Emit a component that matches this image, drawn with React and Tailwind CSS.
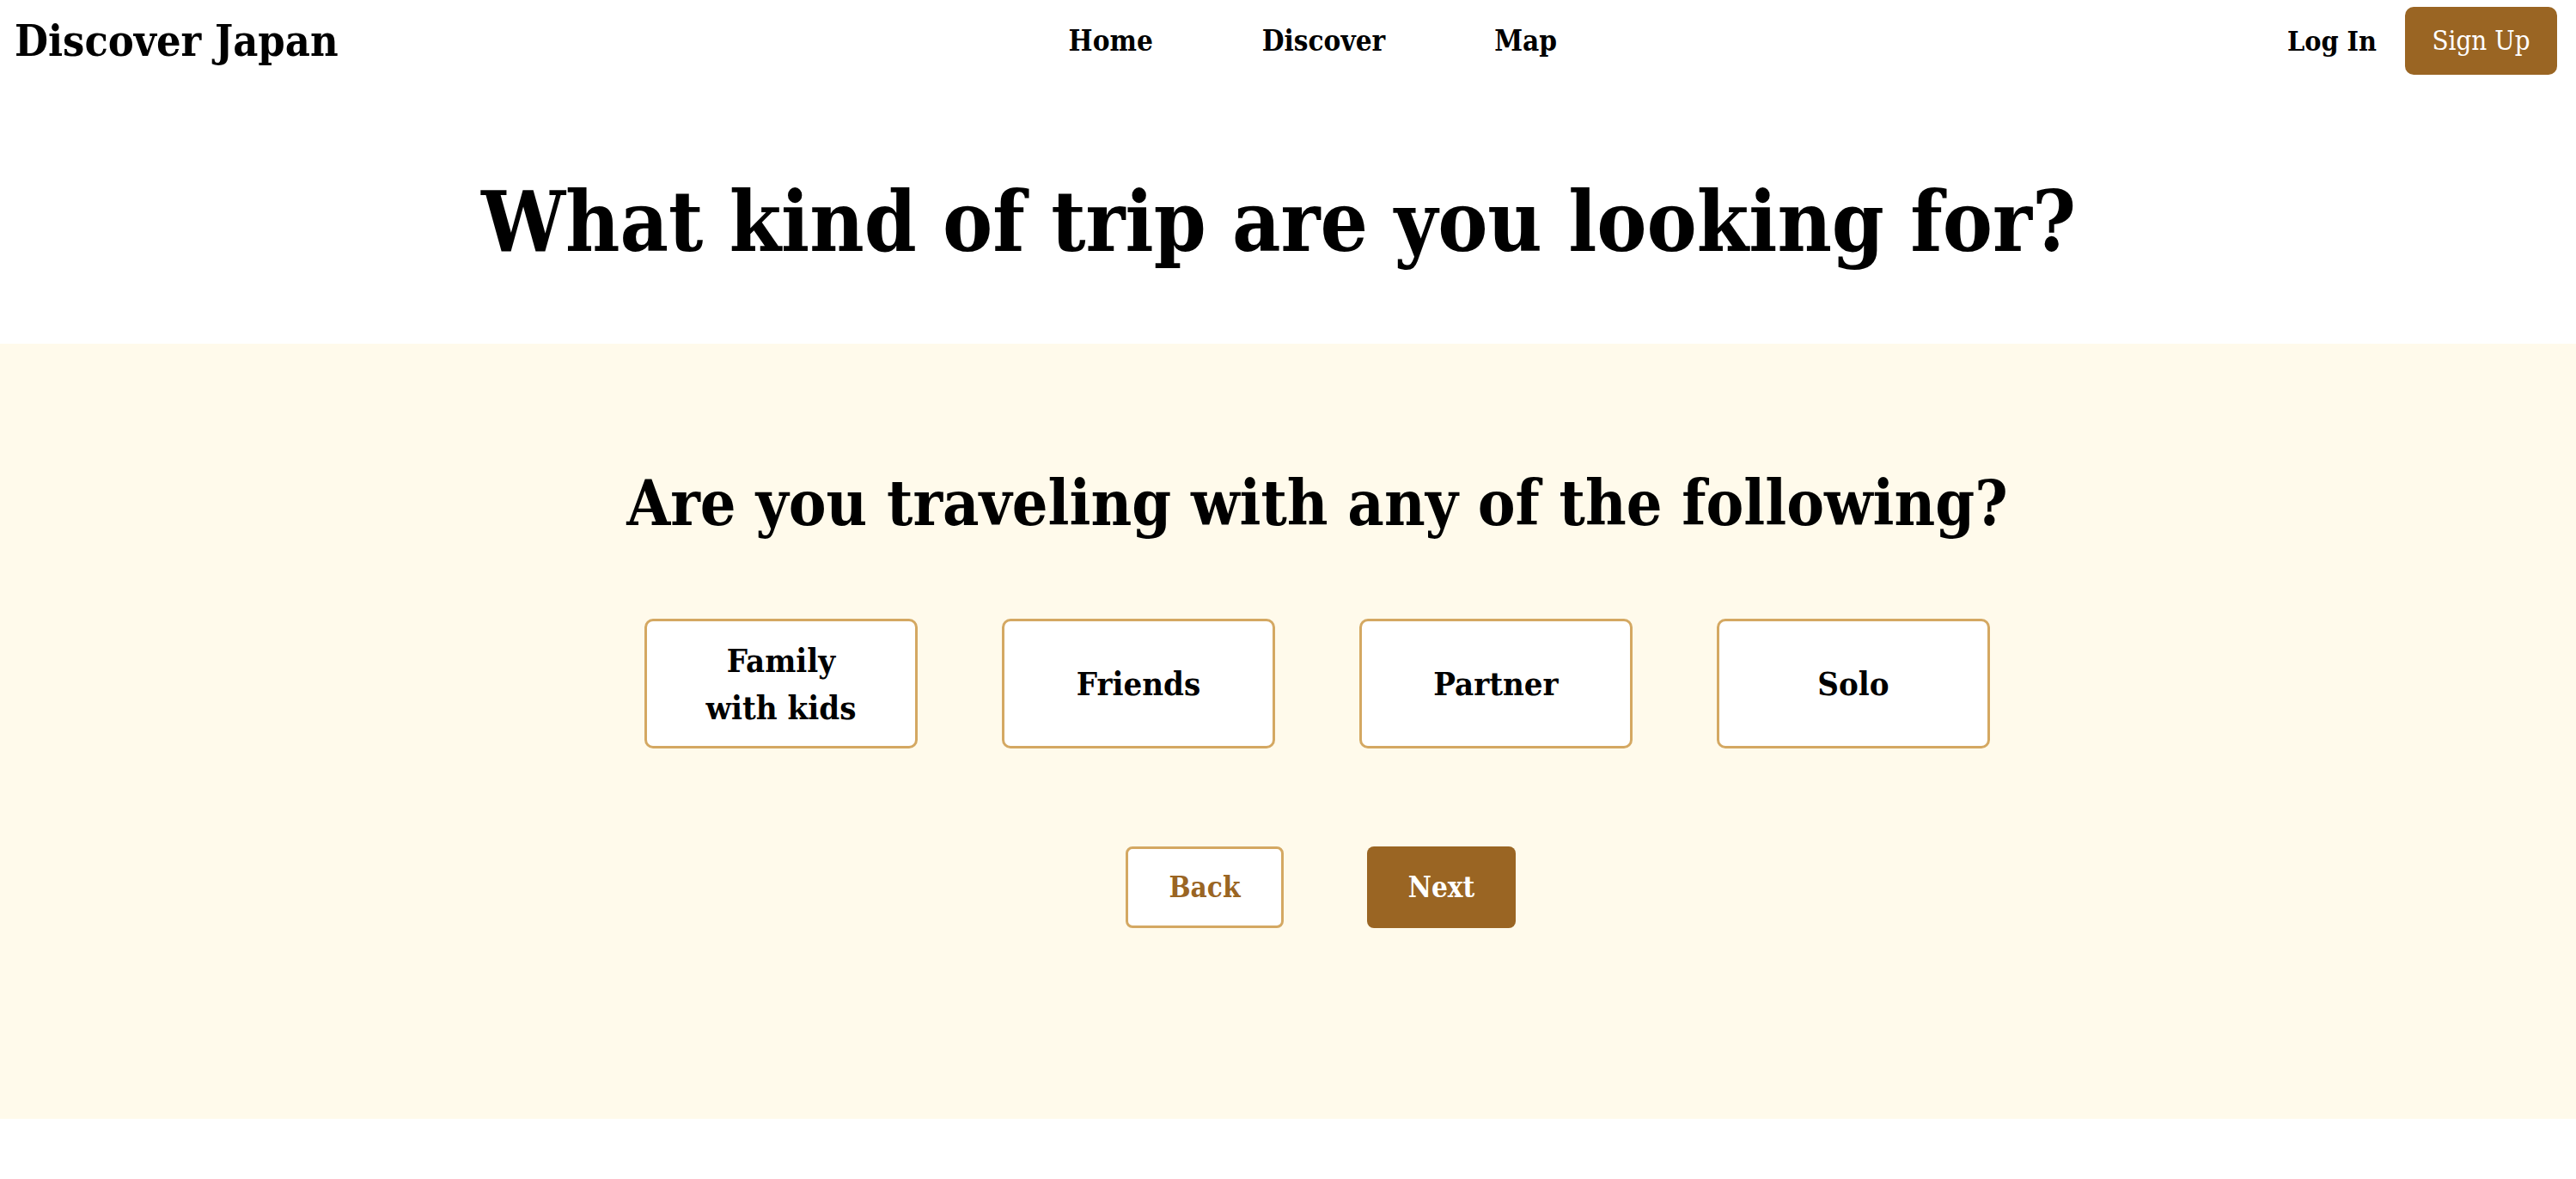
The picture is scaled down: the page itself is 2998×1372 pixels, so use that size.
import React from "react";

const serif = "font-['DejaVu_Serif_Condensed','DejaVu_Serif',serif]";

const options = [
  { id: "family", label: ["Family", "with kids"] },
  { id: "friends", label: ["Friends"] },
  { id: "partner", label: ["Partner"] },
  { id: "solo", label: ["Solo"] },
];

function Nav() {
  return (
    <nav className="flex h-[95px] items-center justify-between pl-[17px] pr-[22px]">
      <a href="#" className="text-[50px] font-bold leading-none text-black">
        Discover Japan
      </a>
      <div className="flex items-center gap-[127px] text-[33px] font-bold text-black">
        <a href="#">Home</a>
        <a href="#">Discover</a>
        <a href="#">Map</a>
      </div>
      <div className="flex items-center gap-[33px]">
        <a href="#" className="text-[32px] font-bold text-black">
          Log In
        </a>
        <button className="h-[79px] w-[177px] rounded-[10px] bg-[#9a6523] text-[31px] text-white">
          Sign Up
        </button>
      </div>
    </nav>
  );
}

export default function App() {
  const [picked, setPicked] = React.useState(null);

  return (
    <div className={`${serif} min-h-screen bg-white text-black`}>
      <Nav />

      <h1 className="mt-[115px] mb-[93px] pr-[22px] text-center text-[97px] font-bold leading-none">
        What kind of trip are you looking for?
      </h1>

      <section className="bg-[#fffaeb] pt-[149px] pb-[222px] pl-[68px]">
        <h2 className="text-center text-[73px] font-bold leading-none">
          Are you traveling with any of the following?
        </h2>

        <div className="mt-[98px] flex justify-center gap-[98px]">
          {options.map((o) => (
            <button
              key={o.id}
              onClick={() => setPicked(o.id)}
              className={
                "flex h-[151px] w-[318px] flex-col items-center justify-center rounded-[10px] border-[3px] border-[#d4a862] text-[38px] font-bold leading-[55px] " +
                (picked === o.id ? "bg-[#fdf1d6]" : "bg-white")
              }
            >
              {o.label.map((l) => (
                <span key={l}>{l}</span>
              ))}
            </button>
          ))}
        </div>

        <div className="mt-[114px] flex justify-center gap-[97px] pl-[8px]">
          <button className="h-[95px] w-[184px] rounded-[8px] border-[3px] border-[#d4a862] bg-white text-[33px] font-bold text-[#9a6523]">
            Back
          </button>
          <button className="h-[95px] w-[173px] rounded-[8px] bg-[#9a6523] text-[33px] font-bold text-white">
            Next
          </button>
        </div>
      </section>
    </div>
  );
}
